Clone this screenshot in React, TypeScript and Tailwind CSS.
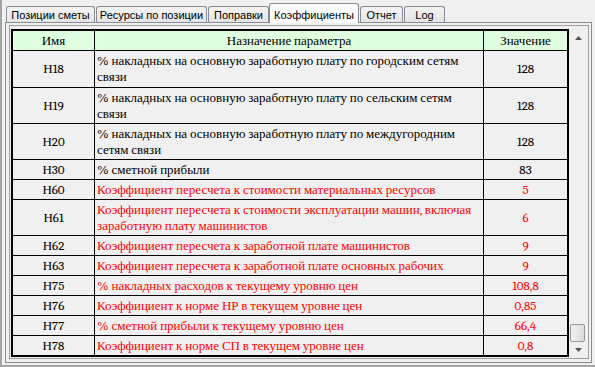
import React from "react";

type Row = { n: string; d: string[]; v: string; red: boolean; h: string };

const rows: Row[] = [
  { n: "Н18", d: ["% накладных на основную заработную плату по городским сетям", "связи"], v: "128", red: false, h: "h-[37px] border-b" },
  { n: "Н19", d: ["% накладных на основную заработную плату по сельским сетям", "связи"], v: "128", red: false, h: "h-[36px] border-b" },
  { n: "Н20", d: ["% накладных на основную заработную плату по междугородним", "сетям связи"], v: "128", red: false, h: "h-[36px] border-b" },
  { n: "Н30", d: ["% сметной прибыли"], v: "83", red: false, h: "h-[20px] border-b" },
  { n: "Н60", d: ["Коэффициент пересчета к стоимости материальных ресурсов"], v: "5", red: true, h: "h-[20px] border-b" },
  { n: "Н61", d: ["Коэффициент пересчета к стоимости эксплуатации машин, включая", "заработную плату машинистов"], v: "6", red: true, h: "h-[36px] border-b" },
  { n: "Н62", d: ["Коэффициент пересчета к заработной плате машинистов"], v: "9", red: true, h: "h-[20px] border-b" },
  { n: "Н63", d: ["Коэффициент пересчета к заработной плате основных рабочих"], v: "9", red: true, h: "h-[20px] border-b" },
  { n: "Н75", d: ["% накладных расходов к текущему уровню цен"], v: "108,8", red: true, h: "h-[20px] border-b" },
  { n: "Н76", d: ["Коэффициент к норме НР в текущем уровне цен"], v: "0,85", red: true, h: "h-[20px] border-b" },
  { n: "Н77", d: ["% сметной прибыли к текущему уровню цен"], v: "66,4", red: true, h: "h-[20px] border-b" },
  { n: "Н78", d: ["Коэффициент к норме СП в текущем уровне цен"], v: "0,8", red: true, h: "h-[19px]" },
];

function Tab({ label, w, ml, selected }: { label: string; w: string; ml: string; selected?: boolean }) {
  if (selected) {
    return (
      <div
        className={`${w} ${ml} relative z-10 mb-[-1px] h-[20px] rounded-t-[3px] border border-b-0 border-[#898c95] bg-[#fbfbfb] pt-[5px] text-center text-[11px] leading-[13px] text-black`}
      >
        {label}
      </div>
    );
  }
  return (
    <div
      className={`${w} ${ml} h-[16px] rounded-t-[3px] border border-b-0 border-[#898c95] bg-linear-to-b from-[#f4f4f4] to-[#e4e4e4] pt-[2px] text-center text-[11px] leading-[13px] text-black`}
    >
      {label}
    </div>
  );
}

function Arrow({ up }: { up?: boolean }) {
  return (
    <svg width="7" height="4" viewBox="0 0 7 4">
      {up ? <polygon points="0,4 7,4 3.5,0" fill="#555" /> : <polygon points="0,0 7,0 3.5,4" fill="#555" />}
    </svg>
  );
}

export default function App() {
  return (
    <div className="flex h-[367px] w-[595px] flex-col overflow-hidden border-b-2 border-l-2 border-[#a3a3a3] bg-[#f0f0f0] [font-family:'Liberation_Sans',Arial,sans-serif]">
      {/* tab strip */}
      <div className="flex h-[22px] items-end pl-[4px]">
        <Tab label="Позиции сметы" w="w-[89px]" ml="ml-0" />
        <Tab label="Ресурсы по позиции" w="w-[111px]" ml="ml-[1px]" />
        <Tab label="Поправки" w="w-[61px]" ml="ml-[1px]" />
        <Tab label="Коэффициенты" w="w-[90px]" ml="ml-0" selected />
        <Tab label="Отчет" w="w-[43px]" ml="ml-[1px]" />
        <Tab label="Log" w="w-[41px]" ml="ml-[1px]" />
      </div>

      {/* tab panel */}
      <div className="ml-[3px] mr-[3px] h-[341px] border border-[#898c95] bg-[#f0f0f0] pl-[3px] pr-[2px] pt-[2px]">
        {/* grid control */}
        <div className="flex h-[334px] border border-[#a0a0a0] bg-[#f0f0f0] pt-[3px] pl-[1px] pb-[1px]">
          {/* table */}
          <div className="flex w-[558px] flex-col border-2 border-black font-serif [font-family:'Liberation_Serif','DejaVu_Serif',serif] text-[13px] leading-[16px] text-black">
            <div className="flex h-[20px] border-b border-black bg-[#e0ffe0]">
              <div className="flex w-[82px] items-center justify-center border-r border-black">Имя</div>
              <div className="flex w-[389px] items-center justify-center border-r border-black">Назначение параметра</div>
              <div className="flex w-[83px] items-center justify-center">Значение</div>
            </div>
            {rows.map((r) => (
              <div key={r.n} className={`flex ${r.h} border-black bg-[#f0f0f0]`}>
                <div className="flex w-[82px] items-center justify-center border-r border-black text-black">{r.n}</div>
                <div
                  className={`flex w-[389px] flex-col justify-center overflow-hidden border-r border-black pl-[2px] ${r.red ? "text-[#ff0000]" : "text-black"}`}
                >
                  {r.d.map((line, i) => (
                    <span key={i} className="block whitespace-nowrap">
                      {line}
                    </span>
                  ))}
                </div>
                <div className={`flex w-[83px] items-center justify-center ${r.red ? "text-[#ff0000]" : "text-black"}`}>
                  {r.v}
                </div>
              </div>
            ))}
          </div>
          {/* scrollbar */}
          <div className="flex w-[19px] flex-col">
            <div className="flex h-[17px] items-center justify-center">
              <Arrow up />
            </div>
            <div className="flex flex-1 flex-col justify-end">
              <div className="ml-[1px] mb-[1px] h-[18px] w-[15px] rounded-[2px] border border-[#979797] bg-linear-to-r from-[#f2f2f2] to-[#dcdcdc]" />
            </div>
            <div className="flex h-[14px] items-center justify-center">
              <Arrow />
            </div>
          </div>
        </div>
      </div>
    </div>
  );
}
